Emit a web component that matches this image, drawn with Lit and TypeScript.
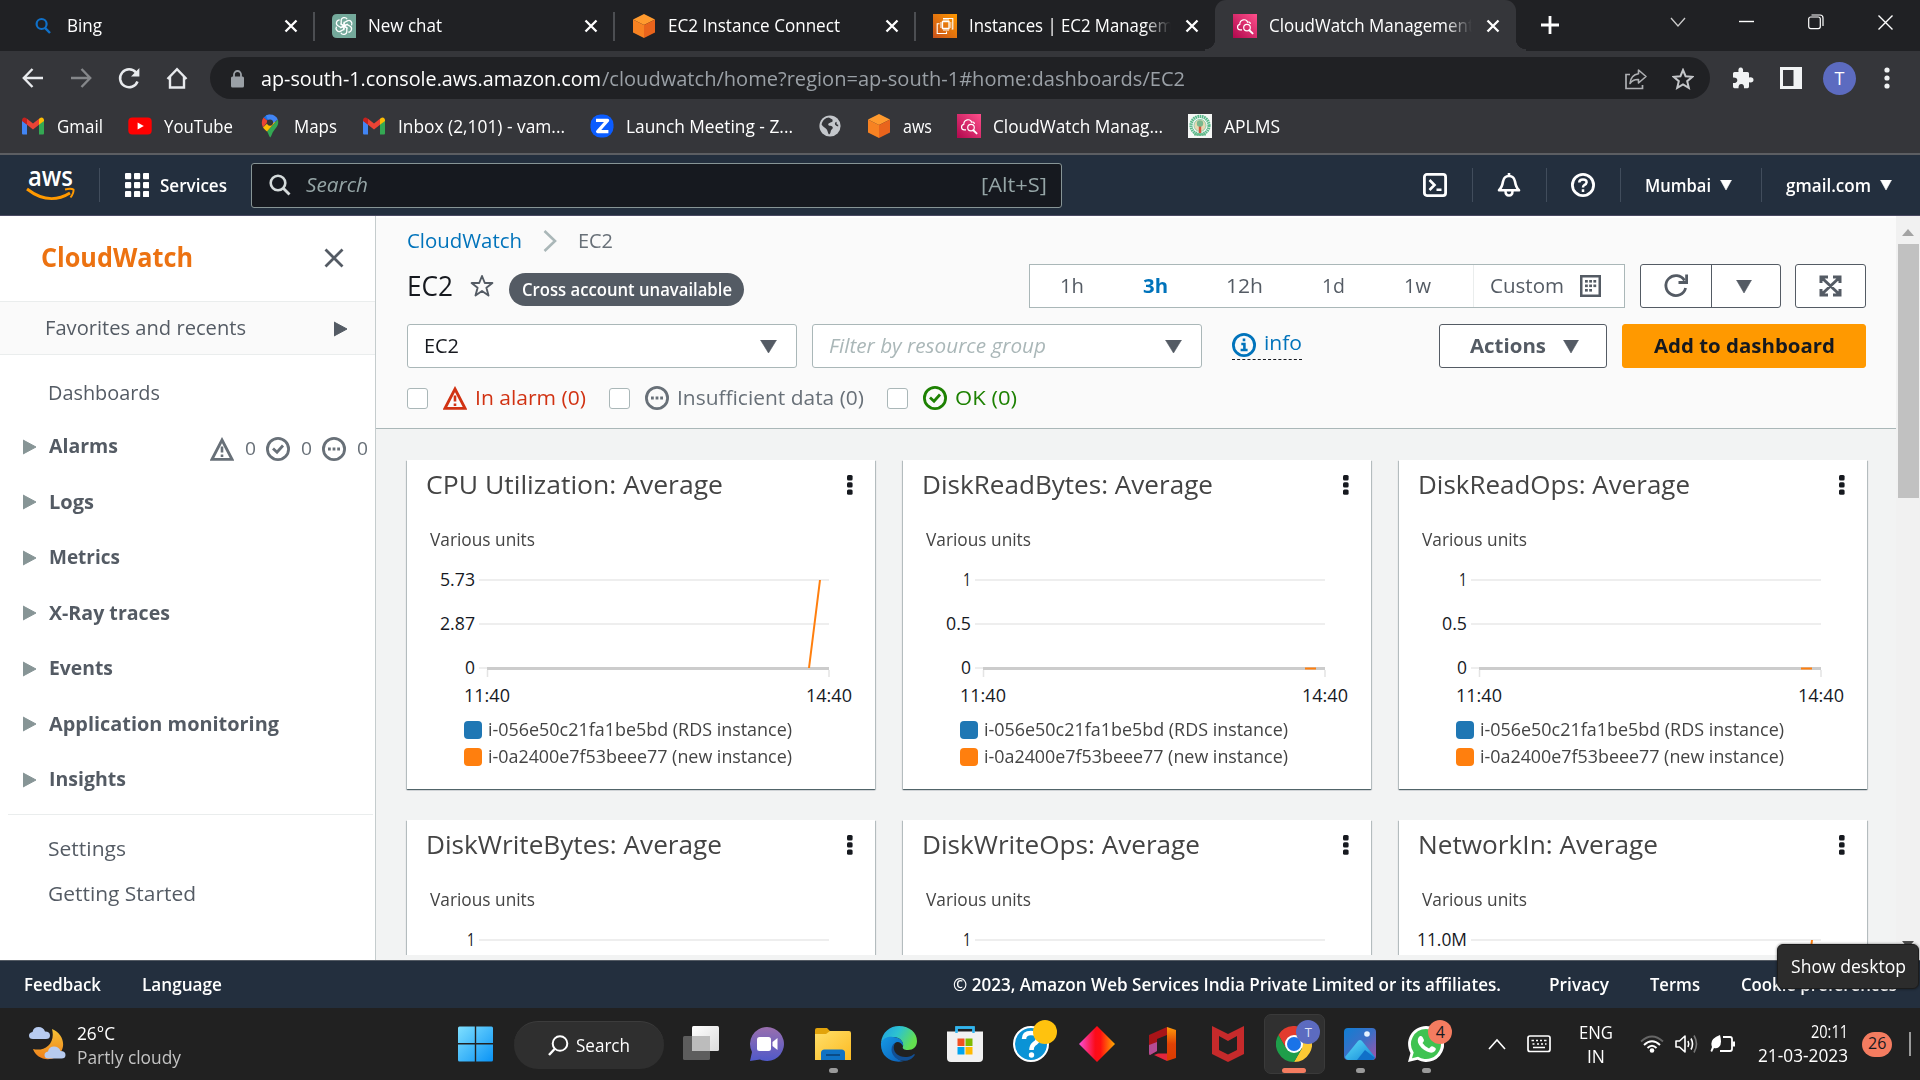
import { LitElement, html, svg, css, TemplateResult } from "lit";
import { customElement, property, query } from "lit/decorators.js";
import { classMap } from "lit/directives/class-map.js";

/** Single-line label whose glyphs are condensed or widened to a given width. */
@customElement("fit-text")
class FitText extends LitElement {
  static styles = css`
    :host { display: block; flex: none; white-space: nowrap; line-height: 1.36; }
    span { display: inline-block; transform-origin: 0 50%; }
  `;
  @property({ type: Number }) w = 0;
  @property() text = "";
  @query("span") label!: HTMLSpanElement;
  render() {
    return html`<span>${this.text}</span>`;
  }
  updated() {
    this.label.style.transform = "none";
    const natural = this.label.getBoundingClientRect().width;
    this.style.width = `${this.w}px`;
    if (natural > 0) this.label.style.transform = `scaleX(${this.w / natural})`;
  }
}

const t = (text: string, w: number, cls = "") =>
  html`<fit-text class=${cls} .text=${text} .w=${w}></fit-text>`;

const icon = (w: number, h: number, body: unknown, box = `0 0 ${w} ${h}`) =>
  html`<svg width=${w} height=${h} viewBox=${box} fill="none">${body}</svg>`;

const down = (w: number, h: number, color = "#545b64") =>
  icon(w, h, svg`<path d="M.5 0H${w - 0.5}L${w / 2} ${h}Z" fill=${color} stroke=${color} stroke-width=".6" stroke-linejoin="round"/>`);
const right = (color: string, w = 13, h = 16) =>
  icon(w, h, svg`<path d="M0 1V${h - 1}L${w} ${h / 2}Z" fill=${color} stroke=${color} stroke-linejoin="round"/>`);

const warn = (c: string) => icon(24, 24, svg`
  <path d="M12 3L22 22.3H2Z" stroke=${c} stroke-width="2.8" stroke-linejoin="miter"/>
  <path d="M12 9.5V15.5M12 17.5V20" stroke=${c} stroke-width="2.6"/>`);
const ok = (c: string) => icon(24, 24, svg`
  <circle cx="12" cy="12" r="10.6" stroke=${c} stroke-width="2.8"/>
  <path d="M7 11.5L11 15.3L17 8.5" stroke=${c} stroke-width="2.8"/>`);
const dots = (c: string) => icon(24, 24, svg`
  <circle cx="12" cy="12" r="10.6" stroke=${c} stroke-width="2.8"/>
  <path d="M6 12H8.8M10.6 12H13.4M15.2 12H18" stroke=${c} stroke-width="3"/>`);

const gmail = () => icon(24, 24, svg`
  <path d="M1 6.5V19.5Q1 20.5 2 20.5H6V10.2Z" fill="#4285f4"/>
  <path d="M23 6.5V19.5Q23 20.5 22 20.5H18V10.2Z" fill="#34a853"/>
  <path d="M18 4.8V10.8L23 7V5.5Q22 2.8 19.6 3.7Z" fill="#fbbc04"/>
  <path d="M1 7V5.5Q2 2.8 4.4 3.7L6 4.8V10.8Z" fill="#c5221f"/>
  <path d="M6 4.8L12 9.6L18 4.8V10.8L12 15.4L6 10.8Z" fill="#ea4335"/>`);
const cube = () => icon(24, 24, svg`
  <path d="M12 0L23 5.5L12 11L1 5.5Z" fill="#ff9a2e"/>
  <path d="M1 5.5L12 11V24L1 18.5Z" fill="#f78222"/>
  <path d="M23 5.5L12 11V24L23 18.5Z" fill="#e9641c"/>`);
const cloudwatch = () => icon(24, 24, svg`
  <defs><linearGradient id="cw" x1="0" y1="1" x2="1" y2="0"><stop stop-color="#b0084d"/><stop offset="1" stop-color="#ff4f8b"/></linearGradient></defs>
  <path d="M0 0H24V24H0Z" fill="url(#cw)"/>
  <path d="M9 15.8H7.2C4 15.6 3.5 11.2 6.8 10.4C6.7 5.4 13.3 4.2 14.6 8.2C16.2 7.6 17.2 8.4 17.4 10" stroke="#fff" stroke-width="1.2"/>
  <circle cx="14" cy="13.6" r="3.3" stroke="#fff" stroke-width="1.2"/>
  <path d="M16.3 16.2L19.6 19.4" stroke="#fff" stroke-width="1.9" stroke-linecap="round"/>`);
const chip = () => icon(24, 24, svg`
  <defs><linearGradient id="ec" x1="0" y1="1" x2="1" y2="0"><stop stop-color="#c8511b"/><stop offset="1" stop-color="#ff9900"/></linearGradient></defs>
  <path d="M0 0H24V24H0Z" fill="url(#ec)"/>
  <path d="M9.5 7.5H16V14.5H9.5Z" stroke="#fff" stroke-width="1.3"/>
  <path d="M11 5V7M13 5V7M15 5V7M11 15V17M13 15V17M15 15V17M7 9H9M7 11H9M7 13H9M16.5 9H18.5M16.5 11H18.5M16.5 13H18.5" stroke="#fff"/>
  <path d="M10 4.5H19.8V15H18.6M6.5 9.7H4.2V19.5H13.5V17.5" stroke="#fff" stroke-width="1.1"/>`);
const chatgpt = () => icon(24, 24, svg`
  <path d="M5 0H24V24H5Q0 24 0 19V5Q0 0 5 0Z" fill="#74a99b"/>
  ${[0, 60, 120, 180, 240, 300].map((a) => svg`
    <path transform="rotate(${a} 12 12)" d="M9.2 10.4V6.6C9.2 3.4 13.6 2.4 15.2 5.2M9.2 10.4L12.2 12.1L15.8 10" stroke="#fff" stroke-width="1.3"/>`)}`);
const youtube = () => icon(24, 24, svg`
  <rect x=".3" y="3.6" width="23.4" height="17" rx="4" fill="#f00"/><path d="M9.6 8.6L15.8 12.1L9.6 15.6Z" fill="#fff"/>`);
const maps = () => icon(24, 24, svg`
  <path d="M12 .5A8.4 8.4 0 0 0 5.6 3.4L9.4 6.6Z" fill="#1a73e8"/>
  <path d="M5.6 3.4L10 7.2L5 13.4C3.2 9.6 3.4 6.2 5.6 3.4Z" fill="#ea4335"/>
  <path d="M19.8 5.6C21.4 10.4 18.6 13.4 16.2 16.2C13.9 19 13.6 22 12.2 23.6C10.8 22 10.6 19.6 9 17.6Z" fill="#34a853"/>
  <path d="M5 13.4L16 2.8L17.4 8L9 17.6C7.4 15.8 6 14.8 5 13.4Z" fill="#fbbc04"/>
  <path d="M12 .5C16 .5 18.6 2.6 19.8 5.6L14.8 9.6L9.6 5.2L8 1.6Q9.6 .5 12 .5Z" fill="#4285f4"/>
  <circle cx="12" cy="8.6" r="3.1" fill="#35363a"/>`);
const zoomApp = () => icon(24, 24, svg`
  <rect x=".5" y=".5" width="23" height="23" rx="10" fill="#0b5cff"/>
  <path d="M6 6.4H17.6L7.6 17.6H18.4" stroke="#fff" stroke-width="3.2" stroke-linejoin="round"/>`);
const globe = () => icon(24, 24, svg`
  <circle cx="12" cy="12" r="10.6" fill="#c4c7cb"/>
  <path d="M11 3.6C12.6 5.2 15 4.6 14.6 7C14.2 9 10.6 8.2 10.2 10.4C10.2 12.2 14.4 11.2 14.8 13.4C15 15 13 15 12.8 17C12.6 18.6 12 20 11 20.4C9.6 19 9.8 16.6 8.6 15.2C7 13.6 4.4 12.6 3.6 10.6C4.4 6.4 7.4 3.8 11 3.6Z" fill="#35363a"/>
  <path d="M18.6 8.4C16.8 9.2 17.6 11.4 20.2 11.6" stroke="#35363a" stroke-width="1.6"/>`);
const seal = () => icon(24, 24, svg`
  <path d="M0 0H24V24H0Z" fill="#f5f7f5"/>
  <circle cx="12" cy="11.4" r="9" stroke="#58b98a" stroke-width="3.2" stroke-dasharray="1.6 .6"/>
  <circle cx="12" cy="11.4" r="6" fill="#e7d9b4" stroke="#8fcfab"/>
  <path d="M12 11V19" stroke="#d2573f" stroke-width="2.4"/><circle cx="12" cy="9.5" r="3.2" fill="#79b88d"/>
  <path d="M6 20.5H18" stroke="#67b98d" stroke-width="2"/>`);
const bing = () => icon(24, 24, svg`
  <circle cx="10.6" cy="10" r="5" stroke="#1071c9" stroke-width="2.2"/><path d="M14 13.8L19 19" stroke="#1071c9" stroke-width="2.4"/>`);

const cross = (s: number, c = "#fff", sw = 2.3) =>
  icon(s, s, svg`<path d="M1.5 1.5L${s - 1.5} ${s - 1.5}M${s - 1.5} 1.5L1.5 ${s - 1.5}" stroke=${c} stroke-width=${sw}/>`);

interface Tab { icon: () => TemplateResult; title: string; w: number; fade?: boolean; active?: boolean; line?: boolean }
const TABS: Tab[] = [
  { icon: bing, title: "Bing", w: 35, line: true },
  { icon: chatgpt, title: "New chat", w: 74, line: true },
  { icon: cube, title: "EC2 Instance Connect", w: 172, line: true },
  { icon: chip, title: "Instances | EC2 Managem", w: 204, fade: true },
  { icon: cloudwatch, title: "CloudWatch Management", w: 205, fade: true, active: true },
];
const BOOKMARKS: [() => TemplateResult, string, number][] = [
  [gmail, "Gmail", 46], [youtube, "YouTube", 69], [maps, "Maps", 43], [gmail, "Inbox (2,101) - vam...", 167],
  [zoomApp, "Launch Meeting - Z...", 167], [globe, "", 0], [cube, "aws", 29], [cloudwatch, "CloudWatch Manag...", 170], [seal, "APLMS", 56],
];

@customElement("browser-chrome")
class BrowserChrome extends LitElement {
  static styles = css`
    :host { display: block; color: #fff; background: #35363a; height: 153px; border-bottom: 2px solid #5c5e62; }
    svg { display: block; flex: none; }
    .strip { display: flex; height: 51px; background: #202124; padding-left: 13px; font-size: 17.8px; }
    .tab { position: relative; box-sizing: border-box; width: 300.5px; flex: none; display: flex; align-items: center; padding: 0 16px 0 18px; gap: 12px; }
    .tab.line::after { content: ""; position: absolute; right: -1px; top: 12px; width: 2px; height: 29px; background: #4c4e52; }
    .title { flex: 1; min-width: 0; }
    .fade { -webkit-mask-image: linear-gradient(90deg, #000 86%, transparent 99%); mask-image: linear-gradient(90deg, #000 86%, transparent 99%); }
    .active { background: #35363a; border-radius: 11px 11px 0 0; }
    .active::before, .active::after { content: ""; position: absolute; bottom: 0; width: 10px; height: 12px; }
    .active::before { left: -10px; background: radial-gradient(circle at 0 0, transparent 10px, #35363a 10.5px); }
    .active::after { right: -10px; background: radial-gradient(circle at 10px 0, transparent 10px, #35363a 10.5px); }
    .plus { margin: 15px 0 0 24px; }
    .win { margin: 14px 26px 0 auto; display: flex; gap: 53px; }
    .bar { display: flex; align-items: center; height: 54px; padding-left: 21px; gap: 24px; }
    .pill { box-sizing: border-box; width: 1500px; margin-left: -3px; height: 42px; border-radius: 21px; background: #202124; display: flex; align-items: center; padding: 1px 16px 0 21px; font-size: 20.8px; }
    .lock { margin-right: 17px; }
    .path { color: #9aa0a6; margin-left: 1px; }
    .share { margin: 0 24px 0 auto; }
    .ext { display: flex; align-items: center; margin-left: -2px; }
    .avatar { width: 33px; height: 33px; border-radius: 50%; background: #5c6bc0; display: grid; place-items: center; font-size: 18px; margin: 0 28px 0 21px; }
    .panel { margin-left: 26px; }
    .marks { display: flex; align-items: center; gap: 25px; height: 42px; padding-left: 21px; font-size: 17.8px; }
    .mark { display: flex; align-items: center; gap: 12px; }
  `;
  render() {
    return html`
      <div class="strip">
        ${TABS.map((tab) => html`
          <div class=${classMap({ tab: true, active: !!tab.active, line: !!tab.line })}>
            ${tab.icon()}
            <div class=${classMap({ title: true, fade: !!tab.fade })}>${t(tab.title, tab.w)}</div>
            ${cross(14)}
          </div>`)}
        <div class="plus">${icon(20, 20, svg`<path d="M10 1V19M1 10H19" stroke="#fff" stroke-width="2.8"/>`)}</div>
        <div class="win">
          ${icon(16, 16, svg`<path d="M1 4L8 12L15 4" stroke="#ccc" stroke-width="1.3"/>`)}
          ${icon(16, 16, svg`<path d="M0 7.5H15" stroke="#fff" stroke-width="1.4"/>`)}
          ${icon(16, 16, svg`<rect x=".7" y="3" width="11.6" height="11.6" rx="2" stroke="#fff" stroke-width="1.2"/><path d="M3.5 1H12Q15 1 15 4V12" stroke="#fff" stroke-width="1.2"/>`)}
          ${cross(17, "#fff", 1.4)}
        </div>
      </div>
      <div class="bar">
        ${icon(24, 24, svg`<path d="M22 12H3M11.5 3L2.8 12L11.5 21" stroke="#e8eaed" stroke-width="2.4"/>`)}
        ${icon(24, 24, svg`<path d="M2 12H21M12.5 3L21.2 12L12.5 21" stroke="#85878a" stroke-width="2.4"/>`)}
        ${icon(24, 24, svg`<path d="M20.500 15.5A9 9 0 1 1 19 6.5" stroke="#e8eaed" stroke-width="2.5"/><path d="M22.4 2V10.4H14Z" fill="#e8eaed"/>`)}
        ${icon(24, 24, svg`<path d="M2.5 13L12 3.2L21.500 13M5 11V21.500H19V11" stroke="#e8eaed" stroke-width="2.4"/>`)}
        <div class="pill">
          <div class="lock">${icon(13, 18, svg`<rect y="6.500" width="13" height="11" rx="1.500" fill="#9aa0a6"/><path d="M3 7V4.500A3.500 3.500 0 0 1 10 4.500V7" stroke="#9aa0a6" stroke-width="1.800"/>`)}</div>
          ${t("ap-south-1.console.aws.amazon.com", 340)}
          ${t("/cloudwatch/home?region=ap-south-1#home:dashboards/EC2", 583, "path")}
          <div class="share">${icon(24, 24, svg`<path d="M6 7.500H2V21.500H18.500V18" stroke="#aeb0b3" stroke-width="1.700"/><path d="M14.500 3L22 9.500L14.500 16V12.500C10.500 12.300 8 13.500 6 16.500C6.500 11 9.500 7.500 14.500 6.800Z" stroke="#aeb0b3" stroke-width="1.600" stroke-linejoin="round"/>`)}</div>
          ${icon(22, 22, svg`<path d="M11 2L13.600 8.200L20.300 8.800L15.200 13.200L16.800 19.800L11 16.300L5.200 19.800L6.800 13.200L1.700 8.800L8.400 8.200Z" stroke="#c4c6c9" stroke-width="2"/>`)}
        </div>
        <div class="ext">
          ${icon(22, 22, svg`<path d="M1 6.500Q1 5 2.500 5H6.500Q5.800 .5 8.700 .5Q11.700 .5 11 5H15.500Q17 5 17 6.500V10.500Q21.500 9.800 21.500 13Q21.500 16 17 15.300V19.500Q17 21.200 15.500 21.200H12Q12.300 16.900 9.300 16.900Q6.300 16.900 6.500 21.200H2.500Q1 21.200 1 19.500V16Q5.300 16.200 5.300 13.200Q5.300 10.300 1 10.500Z" fill="#f1f3f4"/>`)}
          <div class="panel">${icon(22, 22, svg`<path d="M0 0H22V22H0ZM3 3V19H13.500V3Z" fill="#f1f3f4" fill-rule="evenodd"/><path d="M4 4H12.500V18H4Z" fill="#35363a"/>`)}</div>
          <div class="avatar">T</div>
          ${icon(6, 22, svg`<circle cx="3" cy="3" r="2.600" fill="#f1f3f4"/><circle cx="3" cy="11" r="2.600" fill="#f1f3f4"/><circle cx="3" cy="19" r="2.600" fill="#f1f3f4"/>`)}
        </div>
      </div>
      <div class="marks">
        ${BOOKMARKS.map(([ic, label, w]) => html`<div class="mark">${ic()}${label ? t(label, w) : ""}</div>`)}
      </div>`;
  }
}

@customElement("aws-header")
class AwsHeader extends LitElement {
  static styles = css`
    :host { display: flex; align-items: center; box-sizing: border-box; height: 61px; background: #232f3e; color: #fff; font-size: 17.800px; font-weight: 600; padding: 0 28px 0 25px; border-bottom: 1px solid #4a4a62; }
    svg { display: block; flex: none; }
    .sep { width: 1px; height: 34px; background: #414d5c; }
    .grid { margin: 0 11px 0 25px; }
    .logo { margin-right: 23px; }
    .search { box-sizing: border-box; width: 811px; height: 45px; margin-left: 24px; background: #16191f; border: 1px solid #879596; border-radius: 3px; display: flex; align-items: center; padding: 0 14px 0 17px; color: #95a5a6; font-size: 20.500px; font-weight: 400; }
    .ph { font-style: italic; margin-left: 15px; }
    .key { margin-left: auto; }
    .tools { margin-left: auto; display: flex; align-items: center; gap: 24.500px; }
    .menu { display: flex; align-items: center; gap: 9px; }
    .region { margin-right: 4px; }
  `;
  render() {
    return html`
      <div class="logo">${icon(51, 34, svg`
        <text x="3" y="18" font-family="Open Sans, Noto Sans, sans-serif" font-size="27" font-weight="600" textLength="45" lengthAdjust="spacingAndGlyphs" fill="#fff">aws</text>
        <path d="M2 21Q24 38 45 25" stroke="#ff9900" stroke-width="2.900"/><path d="M40 21.500Q46 20 48.500 21.500Q49 25 45.500 29.500" stroke="#ff9900" stroke-width="2"/>`)}</div>
      <div class="sep"></div>
      <div class="grid">${icon(24, 24, [0, 9, 18].map((y) => [0, 9, 18].map((x) => svg`<rect x=${x} y=${y} width="6.200" height="6.200" rx="1" fill="#fff"/>`)))}</div>
      ${t("Services", 67)}
      <div class="search">
        ${icon(22, 22, svg`<circle cx="9" cy="9" r="7.300" stroke="#d5dbdb" stroke-width="2.600"/><path d="M14.500 14.500L20.500 20.500" stroke="#d5dbdb" stroke-width="2.800"/>`)}
        ${t("Search", 62, "ph")}${t("[Alt+S]", 66, "key")}
      </div>
      <div class="tools">
        ${icon(24, 24, svg`<rect x="1.400" y="1.400" width="21.200" height="21.200" rx="2.500" stroke="#fff" stroke-width="2.800"/><path d="M6.500 7L11.500 12L6.500 17M13.500 16.800H18.500" stroke="#fff" stroke-width="2.600"/>`)}
        <div class="sep"></div>
        ${icon(24, 24, svg`<path d="M12 0V3M2 17.300Q5 14.500 6 8.500Q7 3 12 3Q17 3 18 8.500Q19 14.500 22 17.300Z" stroke="#fff" stroke-width="2.600" stroke-linejoin="round"/><path d="M8.500 18Q8.500 22.500 12 22.500Q15.500 22.500 15.500 18" stroke="#fff" stroke-width="2.500"/>`)}
        <div class="sep"></div>
        ${icon(24, 24, svg`<circle cx="12" cy="12" r="10.600" stroke="#fff" stroke-width="2.800"/><path d="M8.200 9.500Q8.400 6.500 12 6.500Q15.700 6.500 15.600 9.300Q15.400 11 13.300 12Q12 12.700 12 14.500M12 16.300V19" stroke="#fff" stroke-width="2.500"/>`)}
        <div class="sep"></div>
        <div class="menu region">${t("Mumbai", 66)}${down(12, 10, "#fff")}</div>
        <div class="sep"></div>
        <div class="menu">${t("gmail.com", 85)}${down(12, 10, "#fff")}</div>
      </div>`;
  }
}

@customElement("side-nav")
class SideNav extends LitElement {
  static styles = css`
    :host { display: block; box-sizing: border-box; width: 376px; background: #fff; border-right: 1px solid #c5cccd; color: #545b64; font-size: 19.700px; }
    svg { display: block; flex: none; }
    .head { display: flex; align-items: center; justify-content: space-between; height: 85px; padding: 0 31px 0 41px; font-size: 26px; font-weight: 700; color: #ec7211; box-sizing: border-box; padding-bottom: 1px; }
    .fav { box-sizing: border-box; display: flex; align-items: center; justify-content: space-between; height: 54px; padding: 1px 28px 0 45px; background: #fafafa; border: solid #eaeded; border-width: 1px 0; }
    .item { display: flex; align-items: center; height: 55.500px; padding-left: 23px; gap: 13px; font-weight: 700; }
    .plain { box-sizing: border-box; display: flex; align-items: center; padding-left: 48px; height: 45px; }
    .first { height: 64px; padding-top: 12px; }
    .counts { margin-left: 79px; padding-top: 4px; display: flex; align-items: center; font-weight: 400; font-size: 17.500px; gap: 10.500px; color: #687078; }
    .rule { height: 1px; background: #eaeded; margin: 6px 2px 12px 8px; }
  `;
  render() {
    const g = "#879596";
    const items: [string, number][] = [["Alarms", 69], ["Logs", 45], ["Metrics", 71], ["X-Ray traces", 121], ["Events", 64], ["Application monitoring", 230], ["Insights", 77]];
    const c = "#687078";
    return html`
      <div class="head">${t("CloudWatch", 152)}${cross(20, "#545b64", 2.8)}</div>
      <div class="fav">${t("Favorites and recents", 201)}${right("#545b64")}</div>
      <div class="plain first">${t("Dashboards", 112)}</div>
      ${items.map(([label, w], i) => html`
        <div class="item">${right(g)}${t(label, w)}
          ${i === 0 ? html`<div class="counts">${warn(c)}${t("0", 11)}${ok(c)}${t("0", 11)}${dots(c)}${t("0", 11)}</div>` : ""}
        </div>`)}
      <div class="rule"></div>
      <div class="plain">${t("Settings", 78)}</div>
      <div class="plain">${t("Getting Started", 148)}</div>`;
  }
}

@customElement("metric-card")
class MetricCard extends LitElement {
  static styles = css`
    :host { display: block; height: 329px; background: #fff; color: #444; box-shadow: 0 1px 1px 0 rgba(0, 28, 36, 0.5), 1px 1px 1px 0 rgba(0, 28, 36, 0.18), -1px 1px 1px 0 rgba(0, 28, 36, 0.18); }
    svg { display: block; flex: none; }
    .title { display: flex; align-items: center; justify-content: space-between; height: 49px; padding: 0 22px 0 19px; font-size: 26px; }
    .units { display: flex; align-items: center; height: 47px; padding: 14px 0 0 23px; box-sizing: border-box; font-size: 17.300px; }
    .legend { display: flex; align-items: center; height: 27px; padding-left: 57px; gap: 6px; font-size: 17.500px; }
    text { font-size: 17.300px; fill: #16191f; }
  `;
  @property() name = "";
  @property({ type: Number }) w = 0;
  @property({ attribute: false }) ticks: [string, number][] = [];
  @property() line = "";
  render() {
    return html`
      <div class="title">${t(this.name, this.w)}
        ${icon(6, 20, [0, 7.2, 14.4].map((y) => svg`<rect y=${y} width="5.600" height="5.400" rx="1.500" fill="#16191f"/>`))}</div>
      <div class="units">${t("Various units", 105)}</div>
      ${icon(468, 160, svg`
        <path d="M72 24H422M72 68H422M72 112H422" stroke="#eee" stroke-width="2"/>
        <path d="M80 112.500H422" stroke="#ccc" stroke-width="3"/>
        <path d="M80.500 114V121M422 114V121" stroke="#e4e4e4" stroke-width="1.500"/>
        <path d=${this.line} stroke="#ff7f0e" stroke-width="2"/>
        ${this.ticks.map(([label, w], i) => svg`<text x=${68 - w} y=${30.2 + i * 44} textLength=${w} lengthAdjust="spacingAndGlyphs">${label}</text>`)}
        <text x="57" y="146" textLength="46" lengthAdjust="spacingAndGlyphs">11:40</text>
        <text x="399" y="146" textLength="46" lengthAdjust="spacingAndGlyphs">14:40</text>`)}
      ${([["#1f77b4", "i-056e50c21fa1be5bd (RDS instance)"], ["#ff7f0e", "i-0a2400e7f53beee77 (new instance)"]]).map(([color, label]) => html`
        <div class="legend">${icon(18, 18, svg`<rect width="18" height="18" rx="4" fill=${color}/>`)}${t(label, 304)}</div>`)}`;
  }
}

@customElement("dash-board")
class DashBoard extends LitElement {
  static styles = css`
    :host { display: flex; flex: 1; background: #f2f3f3; color: #545b64; font-size: 19.700px; overflow: hidden; }
    svg { display: block; flex: none; }
    .page { flex: 1; overflow: hidden; padding-bottom: 5px; box-sizing: border-box; display: flex; flex-direction: column; }
    .head { background: #fafafa; border-bottom: 1px solid #aab7b8; border-top: 2px solid #fff; height: 210px; padding: 0 30px 0 31px; flex: none; }
    .row { display: flex; align-items: center; }
    .crumbs { height: 46px; gap: 21px; color: #687078; }
    .link { color: #0073bb; }
    .tools { height: 44px; }
    .h1 { font-size: 26.500px; color: #16191f; }
    .star { margin: 0 15px 0 17px; }
    .badge { margin-top: 7px; height: 33px; width: 235px; border-radius: 17px; background: #545b64; color: #fff; font-size: 17.800px; font-weight: 600; display: flex; align-items: center; justify-content: center; }
    .box { box-sizing: border-box; height: 44px; background: #fff; border: 1px solid #545b64; border-radius: 3px; display: flex; align-items: center; }
    .range { width: 596px; margin-left: auto; border-color: #aab7b8; border-radius: 0; padding-left: 30px; }
    .r1 { margin-right: 59px; } .r3 { margin-right: 58px; color: #0073bb; font-weight: 700; } .r4 { margin-right: 42px; }
    .custom { display: flex; align-items: center; height: 42px; border-left: 1px solid #eaeded; padding-left: 16px; gap: 16px; }
    .half { flex: 1; display: grid; place-items: center; height: 42px; }
    .half + .half { flex: none; width: 69px; box-sizing: border-box; border-left: 1px solid #545b64; padding-right: 5px; }
    .refresh { width: 141px; margin-left: 15px; }
    .full { width: 71px; margin-left: 14px; justify-content: center; }
    .filters { margin-top: 16px; }
    .select { width: 390px; border-color: #aab7b8; padding: 0 19px 0 16px; justify-content: space-between; color: #16191f; }
    .filter { margin-left: 15px; }
    .ph { color: #aab7b8; font-style: italic; }
    .info { display: flex; align-items: center; gap: 8px; margin-left: 30px; padding-bottom: 2px; border-bottom: 2px dashed #16191f; border-bottom-width: 1.500px; color: #0073bb; }
    .word { margin-top: -3px; }
    .actions { margin-left: auto; width: 168px; padding-left: 30px; gap: 17px; font-weight: 700; }
    .add { margin-left: 15px; width: 244px; background: #ff9900; border-color: #ff9900; color: #16191f; font-weight: 700; justify-content: center; }
    .states { height: 60px; }
    .check { box-sizing: border-box; width: 21px; height: 21px; border: 1.500px solid #aab7b8; border-radius: 3px; background: #fff; margin-right: 15px; }
    .state { display: flex; align-items: center; gap: 8px; margin-right: 23px; }
    .alarm { color: #d13212; } .none { color: #687078; } .good { color: #1d8102; }
    .cards { flex: 1; overflow: hidden; display: grid; grid-template-columns: repeat(3, 468px); gap: 31px 28.200px; padding: 31px 26px 0 31px; align-content: start; }
    .scroll { width: 24px; background: #f1f1f1; display: flex; flex-direction: column; align-items: center; padding: 13px 0 12px; box-sizing: border-box; }
    .thumb { width: 21px; height: 254px; background: #c1c1c1; margin: 8px 0 auto 1px; }
  `;
  render() {
    const flat = "M402 112.5H413";
    const one: [string, number][] = [["1", 8], ["0.5", 25], ["0", 10]];
    const cards: [string, number, [string, number][], string][] = [
      ["CPU Utilization: Average", 297, [["5.73", 35], ["2.87", 35], ["0", 10]], "M402 112L413 24"],
      ["DiskReadBytes: Average", 291, one, flat],
      ["DiskReadOps: Average", 272, one, flat],
      ["DiskWriteBytes: Average", 296, one, flat],
      ["DiskWriteOps: Average", 278, one, flat],
      ["NetworkIn: Average", 240, [["11.0M", 50], ["5.5M", 39], ["0", 10]], "M402 112L413 24"],
    ];
    const g = "#545b64";
    return html`
      <div class="page">
        <div class="head">
          <div class="row crumbs">${t("CloudWatch", 115, "link")}${icon(14, 22, svg`<path d="M1.500 1L12 11L1.500 21" stroke="#aab7b8" stroke-width="2.600"/>`)}${t("EC2", 35)}</div>
          <div class="row tools">
            ${t("EC2", 46, "h1")}
            <div class="star">${icon(24, 24, svg`<path d="M12 2L14.800 9H22.400L16.400 13.700L18.500 21.500L12 17L5.500 21.500L7.600 13.700L1.600 9H9.200Z" stroke=${g} stroke-width="1.900" stroke-linejoin="round"/>`)}</div>
            <div class="badge">${t("Cross account unavailable", 210)}</div>
            <div class="box range">
              ${t("1h", 24, "r1")}${t("3h", 25, "r3")}${t("12h", 37, "r1")}${t("1d", 23, "r1")}${t("1w", 27, "r4")}
              <div class="custom">${t("Custom", 74)}
                ${icon(21, 22, svg`<rect x="1.200" y="1.200" width="18.600" height="19.600" stroke=${g} stroke-width="2.600"/>
                  ${[6, 10.5, 15].map((y) => [5.5, 9.7, 13.900].map((x) => y === 15 && x > 13 ? "" : svg`<rect x=${x - 0.5} y=${y - 1} width="2.800" height="2.600" fill=${g}/>`))}`)}
              </div>
            </div>
            <div class="box refresh">
              <div class="half">${icon(26, 26, svg`<path d="M22.600 15A10 10 0 1 1 21.500 7.500" stroke=${g} stroke-width="2.800"/><path d="M23.600 1.500V9.500H15.500" stroke=${g} stroke-width="2.800"/>`)}</div>
              <div class="half">${down(16, 13)}</div>
            </div>
            <div class="box full">${icon(23, 22, svg`<path d="M2 8V2H9M14 2H21V8M21 14V20H14M9 20H2V14M3 3L20 19M20 3L3 19" stroke=${g} stroke-width="3"/>`)}</div>
          </div>
          <div class="row filters">
            <div class="box select">${t("EC2", 35)}${down(17, 13)}</div>
            <div class="box select filter">${t("Filter by resource group", 217, "ph")}${down(17, 13)}</div>
            <div class="info">${icon(24, 24, svg`<circle cx="12" cy="12" r="10.600" stroke="#0073bb" stroke-width="2.800"/><path d="M12 5.500V8.300M9.300 11H12.400V17M8.600 17H15.600" stroke="#0073bb" stroke-width="2.600"/>`)}${t("info", 38, "word")}</div>
            <div class="box actions">${t("Actions", 76)}${down(16, 13)}</div>
            <div class="box add">${t("Add to dashboard", 181)}</div>
          </div>
          <div class="row states">
            <div class="check"></div><div class="state alarm">${warn("#d13212")}${t("In alarm (0)", 111)}</div>
            <div class="check"></div><div class="state none">${dots("#687078")}${t("Insufficient data (0)", 187)}</div>
            <div class="check"></div><div class="state good">${ok("#1d8102")}${t("OK (0)", 62)}</div>
          </div>
        </div>
        <div class="cards">
          ${cards.map(([name, w, ticks, line]) => html`<metric-card .name=${name} .w=${w} .ticks=${ticks} .line=${line}></metric-card>`)}
        </div>
      </div>
      <div class="scroll">
        ${icon(12, 7, svg`<path d="M0 7H12L6 0Z" fill="#a3a3a3"/>`)}
        <div class="thumb"></div>
        ${icon(12, 8, svg`<path d="M0 1H12L6 8Z" fill="#505050"/>`)}
      </div>`;
  }
}

const APPS: { art: () => TemplateResult; open?: boolean; current?: boolean; badge?: string; tone?: string }[] = [
  { art: () => icon(36, 36, svg`<defs><linearGradient id="tv" x1="0" y1="0" x2="1" y2="1"><stop stop-color="#fff"/><stop offset="1" stop-color="#dcdcdc"/></linearGradient></defs>
      <rect x="9" y="0" width="27" height="25" rx="1.500" fill="url(#tv)"/><rect x="0" y="10" width="27" height="24" rx="1.500" fill="#5d5d5d"/><path d="M9 10H27V25H9Z" fill="#bcbcbc"/>`) },
  { art: () => icon(36, 36, svg`<defs><linearGradient id="ch" x1="0" y1="0" x2="0" y2="1"><stop stop-color="#9a6fae"/><stop offset="1" stop-color="#5059c9"/></linearGradient></defs>
      <path d="M18 1A17 17 0 1 1 11 33.500L1 35L3 26A17 17 0 0 1 18 1Z" fill="url(#ch)"/><rect x="8" y="11" width="14" height="14" rx="2.500" fill="#fff"/><path d="M23.500 16L28.500 12V24L23.500 20Z" fill="#fff"/>`) },
  { open: true, art: () => icon(36, 36, svg`<defs><linearGradient id="fo" x1="0" y1="0" x2="1" y2="1"><stop stop-color="#ffdf69"/><stop offset="1" stop-color="#fcbb23"/></linearGradient></defs>
      <path d="M0 4Q0 2 2 2H12L15 5H34V12H0Z" fill="#e2a30b"/><path d="M0 8H11L15 5H34Q36 5 36 7V34H0Z" fill="url(#fo)"/><path d="M6 34V27Q6 23.500 9.500 23.500H26.500Q30 23.500 30 27V34Z" fill="#0f72c4"/><path d="M11 29H25" stroke="#0a4b87" stroke-width="2"/>`) },
  { art: () => icon(38, 36, svg`<defs><linearGradient id="e1" x1="0" y1="0" x2="1" y2=".4"><stop stop-color="#1f9de4"/><stop offset=".5" stop-color="#2dc3d0"/><stop offset="1" stop-color="#63e04f"/></linearGradient>
      <linearGradient id="e2" x1="0" y1="0" x2="1" y2="1"><stop stop-color="#1499e6"/><stop offset="1" stop-color="#0c5fb8"/></linearGradient></defs>
      <path d="M1 17C2 6 10 0 19 0C30 0 37 7 37 15C37 21 33 24 28 24C24 24 22 22.500 23 20.500C24 17 21 11 13 11C7 11 3 14 1 17Z" fill="url(#e1)"/>
      <path d="M1 17C3 12 8 10 13 11C20 11 24 16 23 20C20 14 14 15 13 21C12 28 17 35 24 35C12 38 0 31 1 17Z" fill="url(#e2)"/>
      <path d="M15 17C11 24 17 32 27 31C31 30.500 33 29 34 28C36 28 34 31 31 33C22 38 12 32 11.500 24C11.500 20 13 18 15 17Z" fill="#124f93"/>`) },
  { art: () => icon(36, 36, svg`<path d="M9.500 8V1.500H26.500V8" stroke="#32b5ee" stroke-width="2.400"/><path d="M0 5.500H36V32Q36 36 32 36H4Q0 36 0 32Z" fill="#f1f1f1"/>
      <path d="M10.500 12.500H17.500V20H10.500Z" fill="#f25022"/><path d="M18.500 12.500H25.500V20H18.500Z" fill="#7fba00"/><path d="M10.500 21H17.500V28.500H10.500Z" fill="#00a4ef"/><path d="M18.500 21H25.500V28.500H18.500Z" fill="#ffb900"/><path d="M9.500 7V1.500H26.500V7" stroke="#32b5ee" stroke-width="2.400"/>`) },
  { badge: "", tone: "gold", art: () => icon(36, 36, svg`<circle cx="18" cy="18" r="17" fill="#0a93d6" stroke="#fff" stroke-width="2"/><path d="M11 13Q11 7 18 7Q25.500 7 25 13Q24.500 16 21 18Q18.500 20 18.500 24" stroke="#fff" stroke-width="4.500"/><circle cx="18.500" cy="29" r="2.700" fill="#fff"/>`) },
  { art: () => icon(36, 36, svg`<defs><linearGradient id="di"><stop stop-color="#f64fd8"/><stop offset=".45" stop-color="#fb0b1a"/><stop offset=".6" stop-color="#ff1010"/><stop offset="1" stop-color="#ffae00"/></linearGradient></defs><path d="M18 0L36 18L18 36L0 18Z" fill="url(#di)"/>`) },
  { art: () => icon(28, 34, svg`<defs><linearGradient id="of" x1="0" y1="0" x2="0" y2="1"><stop stop-color="#ff9a0a"/><stop offset=".5" stop-color="#e04205"/><stop offset="1" stop-color="#d83b01"/></linearGradient></defs>
      <path d="M18 0L27 3V31L18 34Z" fill="url(#of)"/><path d="M0 8L18 0V8L8 12V24L1 28Q0 28 0 26Z" fill="#a81418"/><path d="M0 18L8 15V24L1 28Q0 28 0 26Z" fill="#b44c94"/><path d="M5 28L9 26.500H18V34Z" fill="#e3263c"/>`) },
  { art: () => icon(32, 36, svg`<path d="M0 0L16 8L32 0V28L16 36L0 28ZM7 10V24L16 28.500L25 24V10L16 15Z" fill="#c62a2b" fill-rule="evenodd"/>`) },
  { open: true, current: true, badge: "T", tone: "violet", art: () => icon(36, 36, svg`
      <path d="M2.400 9A18 18 0 0 1 33.600 9H18L10.200 22.500Z" fill="#e33b2e"/><path d="M33.600 9A18 18 0 0 1 18 36L25.800 22.500L18 9Z" fill="#fcc934"/><path d="M18 36A18 18 0 0 1 2.400 9L10.200 22.500H25.800Z" fill="#1e9e4a"/>
      <circle cx="18" cy="18" r="9" fill="#fff"/><circle cx="18" cy="18" r="7" fill="#1a73e8"/>`) },
  { open: true, art: () => icon(34, 34, svg`<defs><linearGradient id="ph" x1="0" y1="0" x2="1" y2="1"><stop stop-color="#0f7fd4"/><stop offset=".5" stop-color="#3d6fc6"/><stop offset="1" stop-color="#a452a8"/></linearGradient><linearGradient id="pm" x1="0" y1="0" x2="1" y2="1"><stop stop-color="#5fdcf8"/><stop offset="1" stop-color="#1187d8"/></linearGradient></defs>
      <rect x="1" y="1" width="32" height="32" rx="4" fill="url(#ph)"/><circle cx="24" cy="7" r="2.800" fill="#e6f2ff"/><path d="M2 30L15 14Q17 12 19 14L32 30Q31 33 29 33H5Q3 33 2 30Z" fill="url(#pm)"/><path d="M14 33L22 23L32 31Q31 33 29 33Z" fill="#1070c8"/>`) },
  { open: true, badge: "4", tone: "coral", art: () => icon(36, 36, svg`<path d="M18 0A18 18 0 1 1 9.500 33.800L0 36L2.500 27A18 18 0 0 1 18 0Z" fill="#fff"/><path d="M18 3A15 15 0 1 1 10 30.700L4 32.300L5.700 26.500A15 15 0 0 1 18 3Z" fill="#3fc351"/>
      <path d="M12 10Q13.500 9.500 14.500 11L16 14Q16 15.500 14.500 17Q17 21 21 22.500L23 20.500Q24 20 25 20.500L27.500 22Q28.500 23 27 25Q24 28 19 25.500Q12 22 10 16.500Q9 12 12 10Z" fill="#fff"/>`) },
];

@customElement("task-bar")
class TaskBar extends LitElement {
  static styles = css`
    :host { display: flex; align-items: center; height: 72px; background: #212121; color: #fff; font-size: 17.500px; }
    svg { display: block; flex: none; }
    .weather { display: flex; align-items: center; gap: 11px; margin-left: 29px; width: 429px; }
    .stack { display: flex; flex-direction: column; }
    .temp { padding-top: 4px; }
    .dim { color: #c3c3c3; }
    .search { box-sizing: border-box; height: 48px; width: 150px; margin: 2px 4px 0 21px; border-radius: 24px; background: #2f2f2f; border-top: 1px solid #3c3c3c; display: flex; align-items: center; gap: 7px; padding-left: 34px; }
    .app { position: relative; width: 65.950px; height: 60px; display: grid; place-items: center; }
    .current::before { content: ""; position: absolute; inset: 0 2.500px; background: #303030; border: 1px solid #3a3a3a; border-radius: 7px; box-sizing: border-box; }
    .app svg { position: relative; }
    .dot { position: absolute; bottom: 1px; left: 29px; width: 9px; height: 5px; border-radius: 2.500px; background: #9a9a9a; }
    .current .dot { width: 24px; left: 21px; background: #f47c60; }
    .badge { position: absolute; left: 35px; top: 6px; width: 24px; height: 24px; border-radius: 50%; display: grid; place-items: center; font-size: 16px; line-height: 1; }
    .gold { background: #ffc20e; } .violet { background: #5c6bc0; font-size: 13px; color: #dfe2f5; } .coral { background: #f47c60; color: #16191f; }
    .tray { display: flex; align-items: center; margin-left: 29px; }
    .center { align-items: center; margin: 0 27px 0 28px; padding-top: 2px; }
    .kb { margin-left: 21px; }
    .net { display: flex; gap: 11px; align-items: center; }
    .clock { align-items: flex-end; margin-left: 22px; }
    .note { width: 30px; height: 25px; border-radius: 13px; background: #f47c60; color: #16191f; display: grid; place-items: center; margin-left: 14px; font-size: 16px; }
    .edge { width: 1.500px; height: 24px; background: #9a9a9a; margin-left: 17px; }
  `;
  render() {
    const cloud = "M4 13Q0 13 0 9.500Q0 6.500 3.500 6Q4.500 1 9.500 1Q14.500 1 16 5.500Q21 5.500 21 9.500Q21 13 17 13Z";
    return html`
      <div class="weather">
        ${icon(37, 36, svg`<defs><linearGradient id="mo" x1="0" y1="0" x2="0" y2="1"><stop stop-color="#f5c336"/><stop offset="1" stop-color="#f0801c"/></linearGradient></defs>
          <path d="M23 3C36 8 38 24 27 31C18 36 7 32 4 23C15 26 27 18 23 3Z" fill="url(#mo)"/>
          <path d=${cloud} fill="#b7cbf0"/><path d=${cloud} transform="translate(15.500 19.500)" fill="#b7cbf0"/>`)}
        <div class="stack temp">${t("26°C", 38)}${t("Partly cloudy", 104, "dim")}</div>
      </div>
      ${icon(35, 36, svg`<defs><linearGradient id="wi" x1="0" y1="0" x2="1" y2="1"><stop stop-color="#7fe0ff"/><stop offset="1" stop-color="#0a93f5"/></linearGradient></defs>
        <path d="M1.500 .5H16.800V17H0V2Q0 .5 1.500 .5ZM18.200 .5H33.500Q35 .5 35 2V17H18.200ZM0 18.500H16.800V35.500H1.500Q0 35.500 0 34ZM18.200 18.500H35V34Q35 35.500 33.500 35.500H18.200Z" fill="url(#wi)"/>`)}
      <div class="search">${icon(21, 21, svg`<circle cx="12" cy="8.500" r="7.300" stroke="#fff" stroke-width="2"/><path d="M6.800 13.800L1 20" stroke="#fff" stroke-width="2.400"/>`)}${t("Search", 54)}</div>
      ${APPS.map((a) => html`
        <div class=${classMap({ app: true, current: !!a.current })}>
          ${a.art()}
          ${a.badge !== undefined ? html`<div class="badge ${a.tone}">${a.badge}</div>` : ""}
          ${a.open ? html`<div class="dot"></div>` : ""}
        </div>`)}
      <div class="tray">
        ${icon(18, 12, svg`<path d="M1 11L9 2L17 11" stroke="#fff" stroke-width="1.600"/>`)}
        <div class="kb">${icon(24, 18, svg`<rect x="1" y="1" width="22" height="15.500" rx="2" stroke="#fff" stroke-width="1.700"/><path d="M4.500 5.500H7M9 5.500H11M13 5.500H15M17 5.500H19.500M5.500 9H7.500M10 9H12M14 9H16M18 9H19.500M6 12.500H18" stroke="#fff" stroke-width="1.600"/>`)}</div>
        <div class="stack center">${t("ENG", 34)}${t("IN", 18)}</div>
        <div class="net">
          ${icon(24, 18, svg`<path d="M1 6.500Q12 -3.500 23 6.500" stroke="#666" stroke-width="1.800"/><path d="M4 10Q12 2.500 20 10M7.500 13Q12 8.500 16.500 13" stroke="#fff" stroke-width="1.900"/><circle cx="12" cy="15.500" r="2.300" fill="#fff"/>`)}
          ${icon(24, 20, svg`<path d="M1 7H4.500L10 2V18L4.500 13H1Z" stroke="#fff" stroke-width="1.600" stroke-linejoin="round"/><path d="M13 7Q14.500 10 13 13M16 4.500Q19 10 16 15.500" stroke="#fff" stroke-width="1.600"/><path d="M19 1.500Q24 10 19 18.500" stroke="#777" stroke-width="1.600"/>`)}
          ${icon(26, 18, svg`<path d="M13 2H20Q22 2 22 4V14Q22 16 20 16H10" stroke="#fff" stroke-width="1.800"/><path d="M22.500 6.500H25V11.500H22.500Z" fill="#fff"/><path d="M10 0Q12.500 9 9 12Q6.500 14 4 13L2 17L.5 16L2 12Q-1 4 10 0Z" fill="#fff"/>`)}
        </div>
        <div class="stack clock">${t("20:11", 37)}${t("21-03-2023", 90)}</div>
        <div class="note">26</div>
        <div class="edge"></div>
      </div>`;
  }
}

@customElement("app-root")
class AppRoot extends LitElement {
  static styles = css`
    :host { display: flex; flex-direction: column; position: relative; width: 1920px; height: 1080px; overflow: hidden; background: #fff; font-family: "Open Sans", "Noto Sans", sans-serif; line-height: 1.36; }
    .body { display: flex; height: 744px; }
    .foot { box-sizing: border-box; height: 48px; display: flex; align-items: center; background: #232f3e; border-top: 1px solid #545b64; color: #fff; font-size: 17.800px; font-weight: 600; padding: 0 23px 0 24px; gap: 41px; }
    .copy { margin-left: auto; margin-right: 7px; }
    .tip { position: absolute; left: 1777px; top: 944px; box-sizing: border-box; width: 142px; height: 45px; display: flex; align-items: center; justify-content: center; background: #2c2c2c; border: 1px solid #1c1c1c; border-radius: 6px; color: #fff; font-size: 17.500px; box-shadow: 0 0 2px 1px rgba(0, 0, 0, 0.25); }
  `;
  render() {
    return html`
      <browser-chrome></browser-chrome>
      <aws-header></aws-header>
      <div class="body"><side-nav></side-nav><dash-board></dash-board></div>
      <div class="foot">
        ${t("Feedback", 77)}${t("Language", 80)}
        ${t("© 2023, Amazon Web Services India Private Limited or its affiliates.", 548, "copy")}
        ${t("Privacy", 60)}${t("Terms", 50)}${t("Cookie preferences", 156)}
      </div>
      <task-bar></task-bar>
      <div class="tip">${t("Show desktop", 115)}</div>`;
  }
}
